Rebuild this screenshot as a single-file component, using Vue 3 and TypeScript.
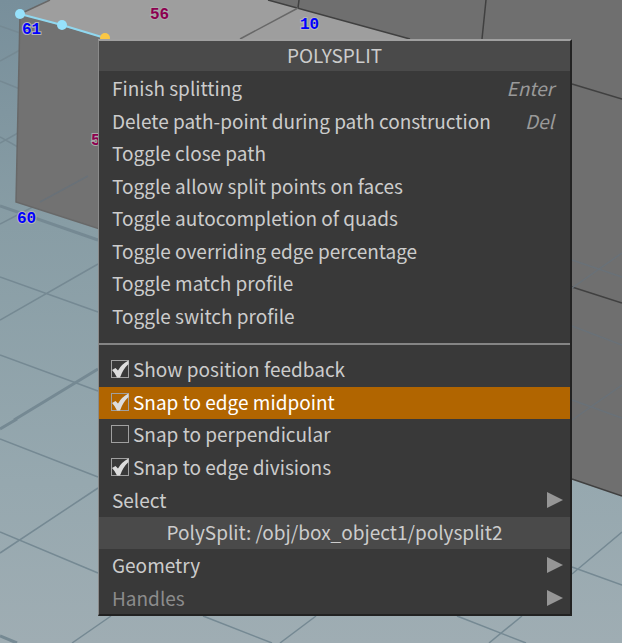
<script setup lang="ts">
import { ref } from 'vue'

interface Action {
  label: string
  shortcut?: string
}

interface Line {
  d: string
  kind: string
}

const actions: Action[] = [
  { label: 'Finish splitting', shortcut: 'Enter' },
  { label: 'Delete path-point during path construction', shortcut: 'Del' },
  { label: 'Toggle close path' },
  { label: 'Toggle allow split points on faces' },
  { label: 'Toggle autocompletion of quads' },
  { label: 'Toggle overriding edge percentage' },
  { label: 'Toggle match profile' },
  { label: 'Toggle switch profile' },
]

const options = ref([
  { id: 'feedback', label: 'Show position feedback', checked: true },
  { id: 'midpoint', label: 'Snap to edge midpoint', checked: true },
  { id: 'perpendicular', label: 'Snap to perpendicular', checked: false },
  { id: 'divisions', label: 'Snap to edge divisions', checked: true },
])
const active = ref('midpoint')

const floor: Line[] = [
  { kind: 'thin', d: 'M0 26 20 33M0 61 20 50M0 81 20 89M0 143 18 133M0 137 18 147M0 224 48 199' },
  { kind: 'thin', d: 'M0 277 98 312M0 320 98 264M0 355 98 391M0 439 98 477M0 553 98 488M0 532 98 573' },
  { kind: 'thin', d: 'M111 616 72 643M203 616 272 643M280 643 316 616M489 643 522 616M457 616 526 643' },
  { kind: 'thin', d: 'M572 567 622 585M572 574 622 532' },
  { kind: 'thick', d: 'M0 206 98 240M14 420 98 369M0 429 17 419M0 636 17 643' },
]
</script>

<template>
  <main class="viewport">
    <svg class="scene" viewBox="0 0 622 643" preserveAspectRatio="xMinYMin slice" aria-hidden="true">
      <defs>
        <linearGradient id="haze" x1="0" y1="0" x2="0" y2="1">
          <stop offset="0" stop-color="#788f9b" />
          <stop offset="0.35" stop-color="#889da5" />
          <stop offset="0.75" stop-color="#96a8af" />
          <stop offset="1" stop-color="#9fadb3" />
        </linearGradient>
      </defs>
      <rect width="622" height="643" fill="url(#haze)" />
      <path v-for="line in floor" :key="line.d" :class="['grid', line.kind]" :d="line.d" />

      <path fill="#6f6f6f" d="M268 0H622V496L400 421V39Z" />
      <path fill="#9e9e9e" d="M20 14 50 0H268L410 39 400 60H180Z" />
      <path fill="#727272" d="M20 14 180 60V254L16 202Z" />
      <path class="edge" d="M268 0 410 39M299 0 298 8M486 0 482 39M572 84 622 99M572 287 622 303M572 479 622 496" />
      <path class="edge soft" d="M20 14 50 0M298 8 240 39M20 14 16 202 100 229" />
      <path class="ghost" d="M572 260 622 277M572 288 622 253M572 326 622 345M572 400 622 418M572 420 622 385M40 202 88 176" />

      <path class="path" d="M20 14 62 25 105 38" />
      <circle cx="20" cy="14" r="5" fill="#96e1fb" />
      <circle cx="62" cy="25" r="5" fill="#96e1fb" />
      <circle cx="105" cy="38" r="5" fill="#fbc744" />

      <g class="numbers">
        <text class="point" x="22" y="34">61</text>
        <text class="point" x="17" y="223">60</text>
        <text class="point" x="300" y="29">10</text>
        <text class="prim" x="150" y="19">56</text>
        <text class="prim" x="91" y="145">57</text>
      </g>
    </svg>

    <div class="menu" role="menu" aria-label="POLYSPLIT">
      <h1 class="heading">POLYSPLIT</h1>

      <div class="group actions">
        <button v-for="action in actions" :key="action.label" class="row" type="button" role="menuitem">
          <span>{{ action.label }}</span>
          <kbd v-if="action.shortcut" class="shortcut">{{ action.shortcut }}</kbd>
        </button>
      </div>

      <hr class="divider" />

      <div class="group options">
        <label
          v-for="option in options"
          :key="option.id"
          :for="option.id"
          :class="['row', 'option', { active: option.id === active }]"
          @mouseenter="active = option.id"
        >
          <span class="tick">
            <input :id="option.id" v-model="option.checked" type="checkbox" />
            <svg v-if="option.checked" viewBox="0 0 18 18" aria-hidden="true">
              <path d="M1 10 4.500 8 7 10.500Q10.500 4 17.500 0.500V4Q12 9 9 17.500H6Q4 13 1 10Z" />
            </svg>
          </span>
          <span>{{ option.label }}</span>
        </label>
        <button class="row" type="button" role="menuitem" aria-haspopup="true">
          <span>Select</span>
          <svg class="arrow" viewBox="0 0 16 16" aria-hidden="true"><path d="M0 0 16 8 0 16Z" /></svg>
        </button>
      </div>

      <h2 class="heading node">PolySplit: /obj/box_object1/polysplit2</h2>

      <div class="group submenus">
        <button class="row" type="button" role="menuitem" aria-haspopup="true">
          <span>Geometry</span>
          <svg class="arrow" viewBox="0 0 16 16" aria-hidden="true"><path d="M0 0 16 8 0 16Z" /></svg>
        </button>
        <button class="row dim" type="button" role="menuitem" aria-haspopup="true" disabled>
          <span>Handles</span>
          <svg class="arrow" viewBox="0 0 16 16" aria-hidden="true"><path d="M0 0 16 8 0 16Z" /></svg>
        </button>
      </div>
    </div>
  </main>
</template>

<style>
body {
  margin: 0;
  background: #96a8af;
}
</style>

<style scoped>
.viewport {
  position: relative;
  box-sizing: border-box;
  min-height: 100vh;
  padding: 39px 50px 24px 98px;
  overflow: hidden;
  font-family: "Noto Sans CJK SC", "Noto Sans", sans-serif;
}

.scene {
  position: absolute;
  inset: 0;
  width: 100%;
  height: 100%;
}

.grid {
  fill: none;
  stroke: #758993;
  stroke-width: 1.5;
}

.grid.thick {
  stroke-width: 3;
}

.edge {
  fill: none;
  stroke: #404040;
  stroke-width: 1.5;
}

.edge.soft {
  stroke: #686868;
}

.ghost {
  fill: none;
  stroke: #697178;
  stroke-width: 1.5;
}

.path {
  fill: none;
  stroke: #90d8f0;
  stroke-width: 2;
}

.numbers {
  font: bold 16px "Liberation Mono", monospace;
  paint-order: stroke;
  stroke-width: 2;
}

.point {
  fill: #0000ff;
  stroke: #b4b4b4;
}

.prim {
  fill: #8c0050;
  stroke: #aaaaaa;
}

.menu {
  position: relative;
  border: 1px solid #222222;
  border-width: 2px 2px 2px 1px;
  border-top-color: #a0a0a0;
  border-left-color: #8a8a8a;
  background: #393939;
  color: #cccccc;
  font-size: 19px;
  line-height: 30px;
}

.heading {
  margin: 0;
  padding-bottom: 2px;
  background: #4a4a4a;
  font-size: 19px;
  font-weight: 400;
  line-height: 28px;
  text-align: center;
}

.node {
  line-height: 30px;
}

.group {
  display: grid;
  grid-auto-rows: 1fr;
}

.actions {
  height: 260px;
  padding-top: 1px;
}

.options {
  height: 163px;
}

.submenus {
  height: 65px;
}

.row {
  display: flex;
  align-items: center;
  justify-content: space-between;
  padding: 0 7px 0 13px;
  border: 0;
  background: none;
  color: inherit;
  font: inherit;
  line-height: 30px;
  text-align: left;
  white-space: nowrap;
}

.options .row {
  padding-bottom: 2px;
}

.shortcut {
  padding-right: 9px;
  color: #999999;
  font: inherit;
  font-style: italic;
}

.divider {
  height: 2px;
  margin: 11px 0 9px;
  border: 0;
  background: #858585;
}

.option {
  justify-content: flex-start;
  gap: 4px;
  padding-left: 12px;
}

.active {
  background: #b16500;
  color: #ffffff;
}

.tick {
  display: grid;
  width: 18px;
  height: 18px;
}

.tick > * {
  grid-area: 1 / 1;
}

.tick input {
  box-sizing: border-box;
  width: 18px;
  height: 18px;
  margin: 0;
  border: 1px solid #a0a0a0;
  appearance: none;
}

.tick svg {
  width: 18px;
  height: 18px;
  fill: #dddddd;
  pointer-events: none;
}

.arrow {
  width: 16px;
  height: 16px;
  fill: #969696;
}

.dim {
  color: #8c8c8c;
}
</style>
